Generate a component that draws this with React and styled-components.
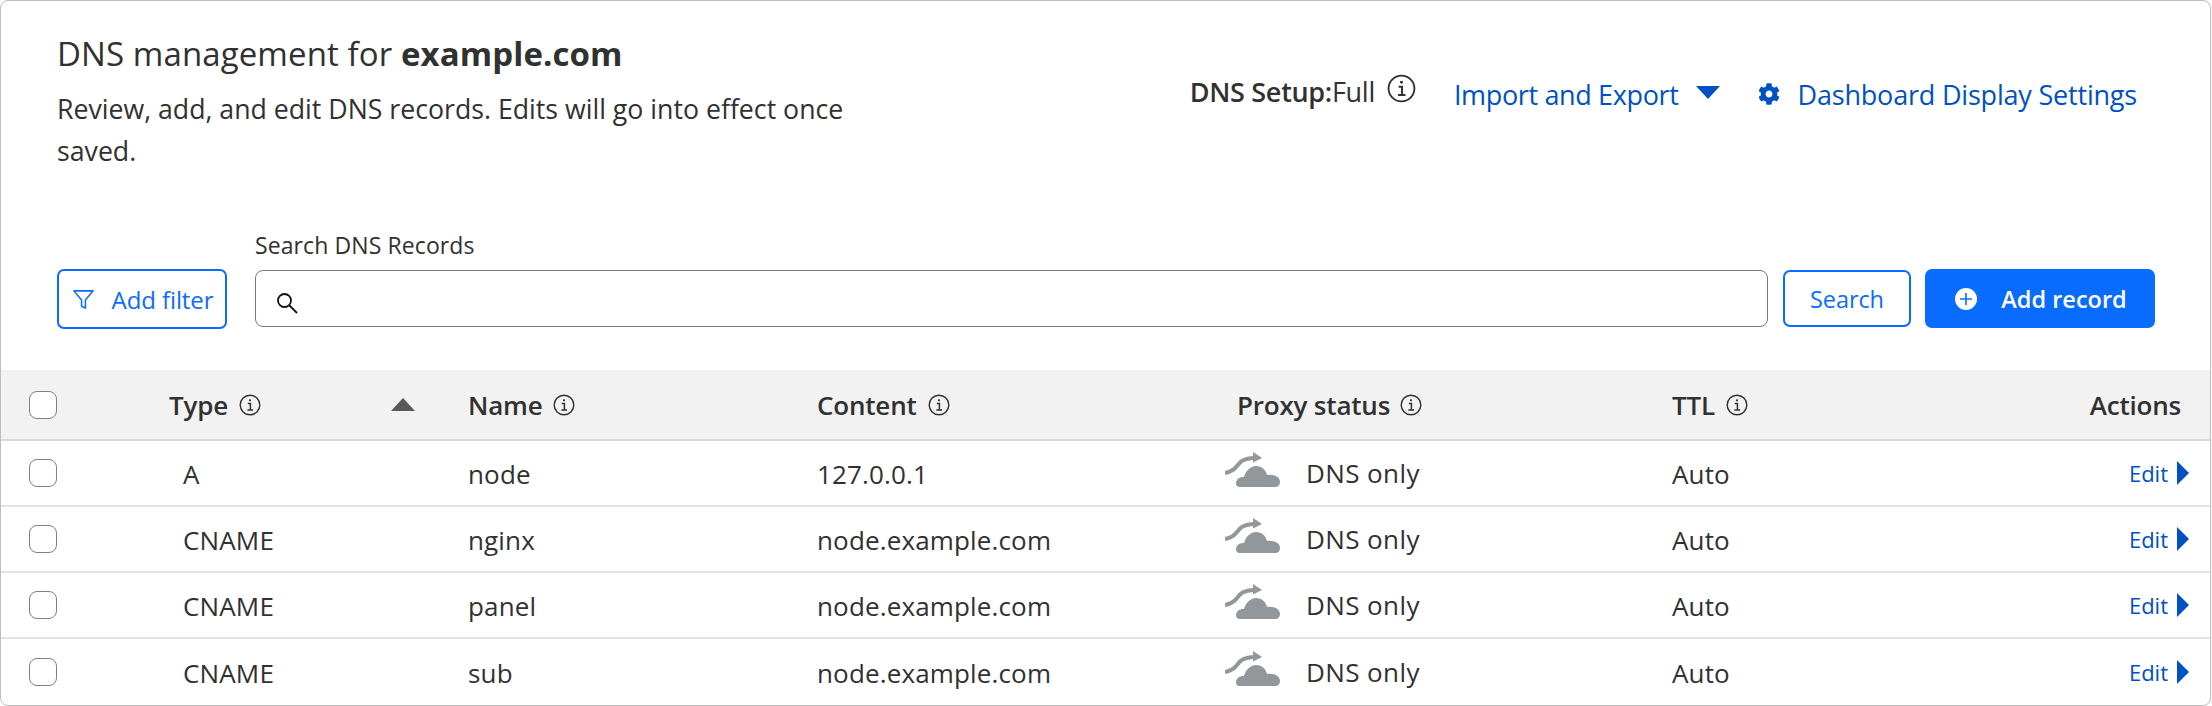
import React from 'react'
import styled, { createGlobalStyle } from 'styled-components'
import { FaCog } from 'react-icons/fa'
import { FiFilter } from 'react-icons/fi'

const records = [
  { type: 'A', name: 'node', content: '127.0.0.1' },
  { type: 'CNAME', name: 'nginx', content: 'node.example.com' },
  { type: 'CNAME', name: 'panel', content: 'node.example.com' },
  { type: 'CNAME', name: 'sub', content: 'node.example.com' },
]

const InfoIcon = ({ size = 22 }) => (
  <InfoSvg width={size} height={size} viewBox="0 0 22 22" fill="none" stroke="#313131">
    <circle cx="11" cy="11" r="9.8" strokeWidth="1.4" />
    <circle cx="11" cy="6.3" r="1.1" fill="#313131" stroke="none" />
    <path d="M8.8 9.6H11.4V15.8M8.4 16H14" strokeWidth="1.5" />
  </InfoSvg>
)

const SearchIcon = () => (
  <svg width="24" height="24" viewBox="0 0 24 24" fill="none" stroke="#111" strokeWidth="1.8">
    <circle cx="9.5" cy="9.5" r="6.5" />
    <path d="M14.5 14.5L22 22" />
  </svg>
)

const PlusIcon = () => (
  <svg width="22" height="22" viewBox="0 0 22 22">
    <circle cx="11" cy="11" r="11" fill="#fff" />
    <path d="M11 5V17M5 11H17" stroke="#0a6cff" strokeWidth="1.6" />
  </svg>
)

const DnsOnlyIcon = () => (
  <svg width="57" height="36" viewBox="0 0 57 36">
    <path d="M0 21C6 20 9 18 12 14C15 10 17 6.500 30 6" fill="none" stroke="#92979b" strokeWidth="4" />
    <path d="M28 0L37 6L28 10.500Z" fill="#92979b" />
    <path
      d="M15 35C11 35 10 31 12 28C14 25 17 25 19 25C21 18 26 14 31 14C37 14 41 18 42 23C47 22 55 24 55 30C55 33 53 35 50 35Z"
      fill="#92979b"
      stroke="#fff"
      strokeWidth="2"
      paintOrder="stroke"
    />
  </svg>
)

const App = () => {
  return (
    <>
      <GlobalStyle />
      <Card>
        <Header>
          <Intro>
            <Title>
              DNS management for <strong>example.com</strong>
            </Title>
            <Description>
              Review, add, and edit DNS records. Edits will go into effect once saved.
            </Description>
          </Intro>
          <HeaderLinks>
            <SetupInfo>
              <strong>DNS Setup:</strong>Full
              <SetupIcon>
                <InfoIcon size={29} />
              </SetupIcon>
            </SetupInfo>
            <ImportLink>
              Import and Export
              <DownCaret />
            </ImportLink>
            <SettingsLink>
              <FaCog size={22} />
              Dashboard Display Settings
            </SettingsLink>
          </HeaderLinks>
        </Header>

        <Toolbar>
          <FilterButton>
            <FiFilter size={23} />
            Add filter
          </FilterButton>
          <SearchField>
            <SearchLabel>Search DNS Records</SearchLabel>
            <SearchBox>
              <SearchIcon />
            </SearchBox>
          </SearchField>
          <SearchButton>Search</SearchButton>
          <AddButton>
            <PlusIcon />
            Add record
          </AddButton>
        </Toolbar>

        <HeadRow>
          <CheckCell>
            <Checkbox />
          </CheckCell>
          <TypeHead>
            <HeadLabel>
              Type <InfoIcon />
            </HeadLabel>
            <SortCaret />
          </TypeHead>
          <HeadLabel>
            Name <InfoIcon />
          </HeadLabel>
          <HeadLabel>
            Content <InfoIcon />
          </HeadLabel>
          <ProxyHead>
            Proxy status <InfoIcon />
          </ProxyHead>
          <HeadLabel>
            TTL <InfoIcon />
          </HeadLabel>
          <ActionsHead>Actions</ActionsHead>
        </HeadRow>

        {records.map((record) => (
          <Row key={record.name}>
            <CheckCell>
              <Checkbox />
            </CheckCell>
            <TypeCell>{record.type}</TypeCell>
            <Cell>{record.name}</Cell>
            <Cell>{record.content}</Cell>
            <ProxyCell>
              <DnsOnlyIcon />
              DNS only
            </ProxyCell>
            <Cell>Auto</Cell>
            <EditCell>
              Edit
              <RightCaret />
            </EditCell>
          </Row>
        ))}
      </Card>
    </>
  )
}

export default App

const GlobalStyle = createGlobalStyle`
  body {
    margin: 0;
    background: #fff;
    color: #313131;
    font-family: "Open Sans", "Noto Sans", sans-serif;
  }
  * {
    box-sizing: border-box;
  }
`

const Card = styled.div`
  width: 2211px;
  height: 706px;
  border: 1px solid #bdbdbd;
  border-radius: 8px;
  overflow: hidden;
`

const Header = styled.div`
  display: flex;
  justify-content: space-between;
  padding: 29px 73px 0 56px;
`

const Intro = styled.div`
  width: 830px;
`

const Title = styled.h1`
  margin: 0;
  font-size: 33px;
  font-weight: 400;
  line-height: 48px;
  letter-spacing: 0.1px;
  strong {
    font-weight: 700;
  }
`

const Description = styled.p`
  margin: 10px 0 0;
  font-size: 26.7px;
  line-height: 42px;
`

const HeaderLinks = styled.div`
  display: flex;
  align-items: center;
  height: 40px;
  margin-top: 44px;
`

const SetupInfo = styled.div`
  display: flex;
  align-items: center;
  font-size: 27px;
  letter-spacing: -0.3px;
  margin-right: 38px;
  margin-top: -6px;
  strong {
    font-weight: 600;
  }
`

const SetupIcon = styled.span`
  display: flex;
  margin-left: 12px;
  margin-top: -6px;
`

const InfoSvg = styled.svg`
  flex: none;
`

const ImportLink = styled.a`
  display: flex;
  align-items: center;
  font-size: 27px;
  letter-spacing: -0.35px;
  color: #0051c3;
  margin-right: 38px;
`

const DownCaret = styled.span`
  margin-left: 17px;
  margin-top: -4px;
  border-left: 12px solid transparent;
  border-right: 12px solid transparent;
  border-top: 13px solid #0051c3;
`

const SettingsLink = styled.a`
  display: flex;
  align-items: center;
  gap: 18px;
  font-size: 27px;
  letter-spacing: -0.2px;
  color: #0051c3;
`

const Toolbar = styled.div`
  display: flex;
  align-items: flex-end;
  height: 97px;
  margin-top: 60px;
  padding-left: 56px;
`

const OutlineButton = styled.button`
  display: flex;
  align-items: center;
  justify-content: center;
  background: #fff;
  border: 2px solid #0a6cff;
  border-radius: 7px;
  color: #0a6cff;
  font-family: inherit;
  font-size: 23.5px;
  letter-spacing: -0.1px;
`

const FilterButton = styled(OutlineButton)`
  width: 170px;
  height: 60px;
  gap: 17px;
  padding: 0 0 0 1px;
  flex: none;
  font-size: 24px;
  svg {
    stroke-width: 1.6;
  }
`

const SearchField = styled.div`
  width: 1513px;
  margin-left: 28px;
  margin-bottom: 2px;
`

const SearchLabel = styled.div`
  font-size: 23px;
  line-height: 28px;
  letter-spacing: 0.1px;
  margin-bottom: 11px;
`

const SearchBox = styled.div`
  display: flex;
  align-items: center;
  height: 57px;
  padding: 8px 0 0 19px;
  border: 1px solid #777;
  border-radius: 8px;
`

const SearchButton = styled(OutlineButton)`
  width: 128px;
  height: 57px;
  margin-left: 15px;
  margin-bottom: 2px;
  flex: none;
`

const AddButton = styled.button`
  display: flex;
  align-items: center;
  justify-content: center;
  gap: 24px;
  width: 230px;
  height: 59px;
  margin-left: 14px;
  margin-bottom: 1px;
  padding-left: 8px;
  flex: none;
  background: #0a6cff;
  border: none;
  border-radius: 7px;
  color: #fff;
  font-family: inherit;
  font-size: 23.5px;
  font-weight: 600;
`

const tableColumns = '168px 299px 349px 407px 448px 300px 1fr'

const HeadRow = styled.div`
  display: grid;
  grid-template-columns: ${tableColumns};
  align-items: center;
  height: 71px;
  margin-top: 41px;
  background: #f2f2f2;
  border-bottom: 2px solid #d9d9d9;
  font-size: 26px;
  font-weight: 600;
  letter-spacing: -0.2px;
`

const Row = styled.div`
  display: grid;
  grid-template-columns: ${tableColumns};
  align-items: center;
  height: 66px;
  border-bottom: 2px solid #e2e2e2;
  font-size: 26px;
  letter-spacing: 0.15px;
  &:last-child {
    border-bottom: none;
  }
`

const CheckCell = styled.div`
  padding-left: 28px;
  display: flex;
`

const Checkbox = styled.span`
  width: 28px;
  height: 28px;
  background: #fff;
  border: 1px solid #808080;
  border-radius: 8px;
`

const HeadLabel = styled.div`
  display: flex;
  align-items: center;
  gap: 11px;
`

const TypeHead = styled.div`
  display: flex;
  align-items: center;
  justify-content: space-between;
  padding-right: 53px;
`

const SortCaret = styled.span`
  border-left: 12px solid transparent;
  border-right: 12px solid transparent;
  border-bottom: 13px solid #595959;
`

const ProxyHead = styled(HeadLabel)`
  padding-left: 13px;
  gap: 10px;
`

const ActionsHead = styled.div`
  text-align: right;
  padding-right: 29px;
`

const Cell = styled.div`
  padding-top: 1px;
`

const TypeCell = styled.div`
  padding: 1px 0 0 14px;
`

const ProxyCell = styled.div`
  display: flex;
  align-items: center;
  gap: 24px;
  padding-left: 1px;
  letter-spacing: 0.4px;
  svg {
    margin-top: -6px;
  }
`

const EditCell = styled.div`
  display: flex;
  align-items: center;
  justify-content: flex-end;
  gap: 9px;
  padding-right: 21px;
  color: #0051c3;
  font-size: 22px;
  letter-spacing: 0;
`

const RightCaret = styled.span`
  border-top: 12px solid transparent;
  border-bottom: 12px solid transparent;
  border-left: 12px solid #0051c3;
`
